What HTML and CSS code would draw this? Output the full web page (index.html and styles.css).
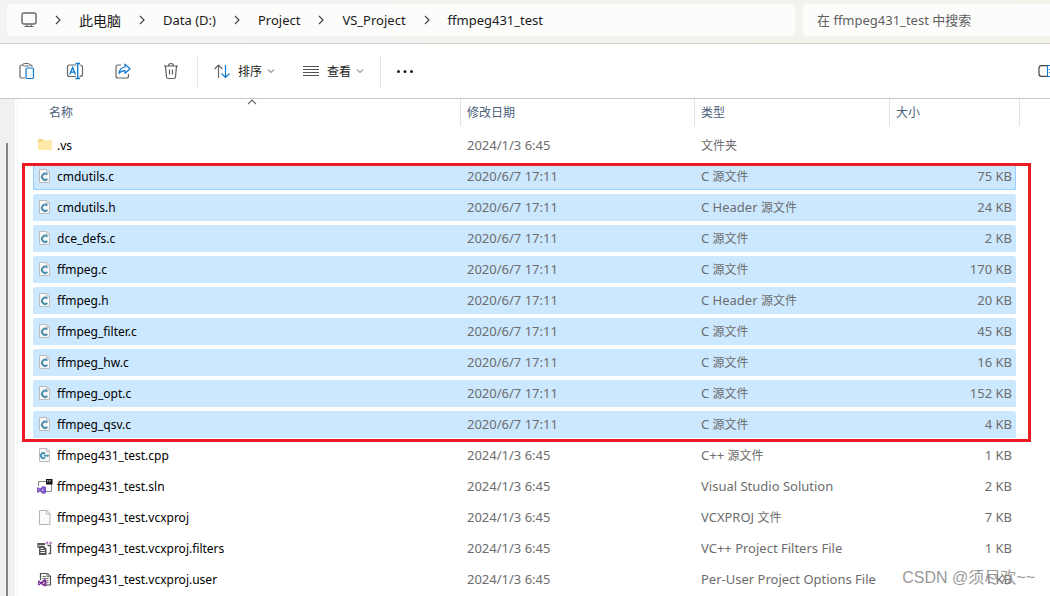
FILE: index.html
```html
<!DOCTYPE html>
<html lang="zh-CN">
<head>
<meta charset="utf-8">
<title>ffmpeg431_test</title>
<link rel="stylesheet" href="styles.css">
</head>
<body>
<svg class="defs" aria-hidden="true">
  <symbol id="chev-right" viewBox="0 0 8 10"><path d="M2 1l4 4-4 4" fill="none" stroke="#444" stroke-width="1.2"/></symbol>
  <symbol id="chev-down" viewBox="0 0 8 6"><path d="M1 1.5l3 3 3-3" fill="none" stroke="#999" stroke-width="1.1"/></symbol>
  <symbol id="page" viewBox="0 0 16 16"><path d="M2.500 .5h7.500l3 3v11h-10.500z" fill="#fafafa" stroke="#b4b4b4"/><path d="M9.500 .5v3.500h3.500" fill="none" stroke="#b4b4b4"/></symbol>
  <symbol id="file-c" viewBox="0 0 16 16"><path d="M2.500 .5h7.500l2.500 2.500v10.500h-10z" fill="#f8f8f8" stroke="#b9bdc0"/><path d="M9.500 .5v3h3" fill="#ddd" stroke="#c3c7ca"/><path d="M10.300 5.600a3.100 3.100 0 1 0 0 4.400" fill="none" stroke="#4b8fae" stroke-width="2"/></symbol>
  <symbol id="file-cpp" viewBox="0 0 16 16"><path d="M2.500 .5h7.500l2.500 2.500v10.500h-10z" fill="#f8f8f8" stroke="#b9bdc0"/><path d="M9.500 .5v3h3" fill="#ddd" stroke="#c3c7ca"/><path d="M8 5.900a2.500 2.500 0 1 0 0 3.600" fill="none" stroke="#3f8fb5" stroke-width="1.800"/><path d="M6.500 7.700h5.500M8.300 6.500v2.500M10.700 6.500v2.500" fill="none" stroke="#3f8fb5"/></symbol>
  <symbol id="folder" viewBox="0 0 16 16"><path d="M1 2q0-1 1-1h3.500L7 2.500h7q1 0 1 1V11q0 1-1 1H2q-1 0-1-1z" fill="#f8d989"/><path d="M1 4h5l1.500-1H14q1 0 1 1v7q0 1-1 1H2q-1 0-1-1z" fill="#ffe8a8"/></symbol>
  <symbol id="sln" viewBox="0 0 16 16"><path d="M1.500 7V2.500H9M14.500 5v7.500H9" fill="none" stroke="#858585"/><path d="M9 0h6.500v5.500H9z" fill="#111"/><path d="M10 1.500h1.500M12.500 1.500H14M10.700 1.500v2M12.500 1.500v2" stroke="#bbb" stroke-width=".7"/><path d="M0 9l1-1 2 1.500L6 7l3 1v6l-3 1-3-2.500L1 14l-1-1z" fill="#7d55c7"/><path d="M1.300 10v2l1-1zM6.500 9.500v3L4.600 11z" fill="#d8c8f5"/></symbol>
  <symbol id="filters" viewBox="0 0 16 16"><path d="M1 3.500h7M1 2v5M10.500 4.500h3v8h-2" fill="none" stroke="#555" stroke-width="1.300"/><path d="M1 2h7v2H1zM2 5h5l2.500 2.500V14H2z" fill="#555"/><path d="M3.500 7.500h3M3.500 9.500h4.500M3.500 11.500h4.500" stroke="#fff"/><path d="M8.500 2h3M10 .5v3M12.200 2h3M13.700.5v3" stroke="#a65fb3"/></symbol>
  <symbol id="user" viewBox="0 0 16 16"><path d="M3.500 8V1.500h7l3 3v8.500H9" fill="#f7f7f7" stroke="#555" stroke-width="1.200"/><path d="M5.500 4.500H9M5.500 6.500h6M10 8.500h1.500M10 10.500h1.500M10 1.500v3h3" fill="none" stroke="#777"/><path d="M1 9l1-.5 2 1.500 3.500-3L9.500 8v5.500l-2 1L4 12 2 13.500l-1-.5z" fill="#782f91"/><path d="M2 10.300v2l1-1zM7.500 9.500v3.200l-2-1.600z" fill="#ead9ef"/></symbol>
</svg>
<div class="window">
  <header class="navbar">
    <nav class="address" aria-label="路径">
      <svg class="pc" viewBox="0 0 16 16"><rect x="1" y="1" width="14" height="11" rx="2" fill="none" stroke="#666" stroke-width="1.400"/><path d="M6 12.500v2M10 12.500v2M3.500 14.500h9" stroke="#666" stroke-width="1.200"/></svg>
      <svg class="sep"><use href="#chev-right"/></svg>
      <a href="#" class="cn">此电脑</a>
      <svg class="sep"><use href="#chev-right"/></svg>
      <a href="#">Data (D:)</a>
      <svg class="sep"><use href="#chev-right"/></svg>
      <a href="#">Project</a>
      <svg class="sep"><use href="#chev-right"/></svg>
      <a href="#">VS_Project</a>
      <svg class="sep"><use href="#chev-right"/></svg>
      <a href="#">ffmpeg431_test</a>
    </nav>
    <input class="search" type="text" aria-label="搜索" placeholder="在 ffmpeg431_test 中搜索">
  </header>
  <div class="toolbar" role="toolbar">
    <div class="actions">
      <button type="button" aria-label="粘贴"><svg viewBox="0 0 18 18"><path d="M5 3H3.500Q2 3 2 4.500v10Q2 16 3.500 16H7M12 3h1Q14 3 14 4.500V5" fill="none" stroke="#666" stroke-width="1.200"/><rect x="5" y="1.500" width="6.500" height="2.500" rx="1.200" fill="none" stroke="#666"/><rect x="8" y="6" width="7.500" height="10.500" rx="1.200" fill="#f4faff" stroke="#0f78cf" stroke-width="1.200"/></svg></button>
      <button type="button" aria-label="重命名"><svg viewBox="0 0 18 18"><path d="M10 3H3.500Q1.500 3 1.500 5v7.500q0 2 2 2H10M13.500 3Q16.500 3 16.500 5v7.500q0 2-3 2" fill="none" stroke="#666" stroke-width="1.200"/><path d="M9.500 1.500h4.500M9.500 16.500h4.500M11.700 1.500v15M3.700 12.500l2.900-7 2.900 7M4.700 10.200h3.900" fill="none" stroke="#0f78cf" stroke-width="1.300"/></svg></button>
      <button type="button" aria-label="共享"><svg viewBox="0 0 18 18"><path d="M7 3H4Q2 3 2 5v9q0 2 2 2h8.500q2 0 2-2v-2" fill="none" stroke="#666" stroke-width="1.200"/><path d="M11 2.200l5 4.600-5 4.500V8.700Q7 8.500 5 11.500 5.500 5.500 11 5z" fill="none" stroke="#0f78cf" stroke-width="1.200" stroke-linejoin="round"/></svg></button>
      <button type="button" aria-label="删除"><svg viewBox="0 0 18 18"><path d="M2 4h14M6.500 4q0-2.500 2.500-2.500T11.500 4M3.500 4l1 11q.2 1.500 1.700 1.500h5.600q1.500 0 1.700-1.500l1-11M7.500 7.500v5M10.500 7.500v5" fill="none" stroke="#5c5c5c" stroke-width="1.200"/></svg></button>
    </div>
    <div class="menus">
      <button type="button"><svg viewBox="0 0 18 18"><path d="M5.500 16V3M1.500 7l4-4 4 4" fill="none" stroke="#666" stroke-width="1.200"/><path d="M12.500 3v12.500M8.500 11.500l4 4 4-4" fill="none" stroke="#0f78cf" stroke-width="1.200"/></svg>排序<svg class="down"><use href="#chev-down"/></svg></button>
      <button type="button"><svg viewBox="0 0 18 18"><path d="M1 4.500h16M1 7.500h16M1 10.500h16M1 13.500h16" stroke="#555"/></svg>查看<svg class="down"><use href="#chev-down"/></svg></button>
    </div>
    <button type="button" class="more" aria-label="更多"><svg viewBox="0 0 18 18"><g fill="#222"><circle cx="2.500" cy="9.500" r="1.500"/><circle cx="9" cy="9.500" r="1.500"/><circle cx="15.500" cy="9.500" r="1.500"/></g></svg></button>
    <button type="button" class="preview" aria-label="预览"><svg viewBox="0 0 12 14"><path d="M10 1.600H3.500Q1 1.600 1 4v6q0 2.400 2.500 2.400H10" fill="none" stroke="#444" stroke-width="1.200"/><path d="M12 1.500H9.500v11H12M11 5.500h1M11 8.500h1" fill="none" stroke="#0f78cf"/></svg></button>
  </div>
  <div class="body">
    <aside class="side"><div class="thumb"></div></aside>
    <main class="list">
      <table>
        <colgroup><col><col class="c-date"><col class="c-type"><col class="c-size"></colgroup>
        <thead><tr><th>名称<svg class="sorted" viewBox="0 0 10 6"><path d="M1 5l4-4 4 4" fill="none" stroke="#666" stroke-width="1.100"/></svg></th><th>修改日期</th><th>类型</th><th>大小</th></tr></thead>
        <tbody>
          <tr><td><svg><use href="#folder"/></svg>.vs</td><td>2024/1/3 6:45</td><td><span class="cn">文件夹</span></td><td></td></tr>
        </tbody>
        <tbody class="selected">
          <tr class="focus"><td><svg><use href="#file-c"/></svg>cmdutils.c</td><td>2020/6/7 17:11</td><td>C <span class="cn">源文件</span></td><td>75 KB</td></tr>
          <tr><td><svg><use href="#file-c"/></svg>cmdutils.h</td><td>2020/6/7 17:11</td><td>C Header <span class="cn">源文件</span></td><td>24 KB</td></tr>
          <tr><td><svg><use href="#file-c"/></svg>dce_defs.c</td><td>2020/6/7 17:11</td><td>C <span class="cn">源文件</span></td><td>2 KB</td></tr>
          <tr><td><svg><use href="#file-c"/></svg>ffmpeg.c</td><td>2020/6/7 17:11</td><td>C <span class="cn">源文件</span></td><td>170 KB</td></tr>
          <tr><td><svg><use href="#file-c"/></svg>ffmpeg.h</td><td>2020/6/7 17:11</td><td>C Header <span class="cn">源文件</span></td><td>20 KB</td></tr>
          <tr><td><svg><use href="#file-c"/></svg>ffmpeg_filter.c</td><td>2020/6/7 17:11</td><td>C <span class="cn">源文件</span></td><td>45 KB</td></tr>
          <tr><td><svg><use href="#file-c"/></svg>ffmpeg_hw.c</td><td>2020/6/7 17:11</td><td>C <span class="cn">源文件</span></td><td>16 KB</td></tr>
          <tr><td><svg><use href="#file-c"/></svg>ffmpeg_opt.c</td><td>2020/6/7 17:11</td><td>C <span class="cn">源文件</span></td><td>152 KB</td></tr>
          <tr><td><svg><use href="#file-c"/></svg>ffmpeg_qsv.c</td><td>2020/6/7 17:11</td><td>C <span class="cn">源文件</span></td><td>4 KB</td></tr>
        </tbody>
        <tbody>
          <tr><td><svg><use href="#file-cpp"/></svg>ffmpeg431_test.cpp</td><td>2024/1/3 6:45</td><td>C++ <span class="cn">源文件</span></td><td>1 KB</td></tr>
          <tr><td><svg><use href="#sln"/></svg>ffmpeg431_test.sln</td><td>2024/1/3 6:45</td><td>Visual Studio Solution</td><td>2 KB</td></tr>
          <tr><td><svg><use href="#page"/></svg>ffmpeg431_test.vcxproj</td><td>2024/1/3 6:45</td><td>VCXPROJ <span class="cn">文件</span></td><td>7 KB</td></tr>
          <tr><td><svg><use href="#filters"/></svg>ffmpeg431_test.vcxproj.filters</td><td>2024/1/3 6:45</td><td>VC++ Project Filters File</td><td>1 KB</td></tr>
          <tr><td><svg><use href="#user"/></svg>ffmpeg431_test.vcxproj.user</td><td>2024/1/3 6:45</td><td>Per-User Project Options File</td><td>1 KB</td></tr>
        </tbody>
      </table>
    </main>
  </div>
  <div class="watermark">CSDN @须尽欢~~</div>
</div>
</body>
</html>
```
FILE: styles.css
```css
* { box-sizing: border-box; }
body {
  margin: 0;
  font-family: "Noto Sans", "Noto Sans CJK SC", sans-serif;
  font-size: 12px;
  color: #000;
  background: #fff;
}
.defs { display: none; }
.window {
  position: relative;
  display: flex;
  flex-direction: column;
  height: 100vh;
  overflow: hidden;
}
svg { flex: none; }
button {
  display: flex;
  align-items: center;
  padding: 0;
  border: 0;
  background: none;
  font: inherit;
  color: #1a1a1a;
}

.navbar {
  display: flex;
  gap: 8px;
  padding: 4px 0 7px 7px;
  background: linear-gradient(90deg, #f3f3f3, #f5f2ec);
  border-bottom: 1px solid #d5d1c8;
}
.address {
  display: flex;
  flex: 1;
  align-items: center;
  height: 32px;
  padding-left: 14px;
  border-radius: 4px;
  background: #fcfcfb;
  font-size: 13px;
}
.address a { color: #1a1a1a; text-decoration: none; }
.address .cn { font-size: 14px; }
.pc { width: 16px; height: 16px; }
.sep { width: 8px; height: 10px; margin: 0 17px; }
.search {
  width: 247px;
  padding: 0 14px;
  border: 0;
  border-radius: 4px 0 0 4px;
  background: #fcfcfb;
  font: inherit;
  font-size: 13px;
}
.search::placeholder { color: #5f5f5f; opacity: 1; }

.toolbar {
  display: flex;
  align-items: center;
  height: 55px;
  padding-left: 18px;
  border-bottom: 1px solid #ccc7c0;
}
.toolbar svg { width: 18px; height: 18px; }
.actions, .menus { display: flex; align-items: center; height: 32px; }
.actions { gap: 30px; padding-right: 17px; border-right: 1px solid #e5e5e5; }
.menus { gap: 27px; padding: 0 16px 0 15px; border-right: 1px solid #e5e5e5; }
.menus button { gap: 7px; }
.menus .down { width: 8px; height: 6px; margin-left: -2px; }
.more { margin-left: 15px; }
.preview { margin-left: auto; }
.toolbar .preview svg { width: 12px; height: 14px; }

.body { display: flex; flex: 1; min-height: 0; }
.side {
  display: flex;
  width: 15px;
  padding: 44px 0 0 6px;
  background: #f0f0f0;
}
.thumb { width: 2px; background: #868686; }
.list {
  flex: 1;
  margin-left: 2px;
  padding: 0 34px 0 15px;
  border-left: 1px solid #f3f3f3;
}
table {
  width: 100%;
  table-layout: fixed;
  border-spacing: 0;
}
.c-date { width: 234px; }
.c-type { width: 195px; }
.c-size { width: 127px; }
th {
  position: relative;
  height: 33px;
  padding: 0 0 2px 7px;
  border-bottom: 6px solid transparent;
  background-clip: padding-box;
  box-shadow: inset 1px 0 #e2e2e2;
  color: #4c607a;
  font-weight: 400;
  text-align: left;
}
th:first-child { padding-left: 16px; box-shadow: none; }
th:last-child::after {
  content: "";
  position: absolute;
  inset: 0 -4px 0 auto;
  width: 1px;
  background: #e2e2e2;
}
.sorted {
  position: absolute;
  top: 0;
  left: 50%;
  width: 10px;
  height: 6px;
}
td {
  height: 31px;
  padding: 0 0 2px 7px;
  border-bottom: 4px solid transparent;
  background-clip: padding-box;
  color: #6d6d6d;
  font-size: 13px;
  line-height: 20px;
  white-space: nowrap;
}
td:first-child { padding: 0 0 0 4px; color: #000; font-size: 12px; }
td:last-child { padding-right: 4px; text-align: right; }
td svg {
  width: 16px;
  height: 16px;
  margin-right: 4px;
  vertical-align: middle;
}
td .cn { font-size: 12px; line-height: 1; }
.selected { position: relative; }
.selected td { background-color: #cce8ff; }
.selected td:first-child { border-radius: 2px 0 0 2px; }
.selected td:last-child { border-radius: 0 2px 2px 0; }
.focus td { box-shadow: inset 0 -1px #99d1ff; }
.focus td:first-child { box-shadow: inset 1px -1px #99d1ff; }
.focus td:last-child { box-shadow: inset -1px -1px #99d1ff; }
.selected::after {
  content: "";
  position: absolute;
  inset: 0 -15px 0 -11px;
  border: 3px solid #ed1c24;
}
.watermark {
  position: absolute;
  right: 15px;
  bottom: 6px;
  color: #8f8f8f;
  font-family: "Liberation Sans", "Noto Sans CJK SC", sans-serif;
  font-size: 16px;
  line-height: 24px;
  opacity: .9;
}
```
